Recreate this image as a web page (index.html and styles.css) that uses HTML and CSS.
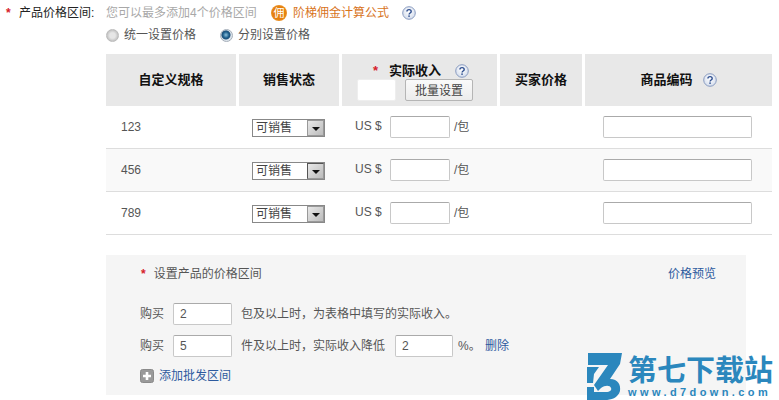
FILE: index.html
```html
<!DOCTYPE html>
<html lang="zh">
<head>
<meta charset="utf-8">
<title>产品价格区间</title>
<link rel="stylesheet" href="styles.css">
</head>
<body>
<svg width="0" height="0" class="defs">
  <defs>
    <radialGradient id="helpbg" cx="50%" cy="40%" r="60%"><stop offset="0" stop-color="#fff"/><stop offset="1" stop-color="#d3dcec"/></radialGradient>
    <symbol id="help" viewBox="0 0 14 14">
      <circle cx="7" cy="7" r="6.3" fill="url(#helpbg)" stroke="#8a9cc0" stroke-width="1"/>
      <path d="M4.9 5.6c0-1.3 1-2 2.2-2s2.1.7 2.1 1.8c0 1.6-2.1 1.6-2.1 3" fill="none" stroke="#2f4f8f" stroke-width="1.4"/>
      <rect x="6.3" y="9.4" width="1.5" height="1.5" fill="#2f4f8f"/>
    </symbol>
  </defs>
</svg>
<main class="page">
  <div class="head-row">
    <span class="req star-top">*</span>
    <span class="label">产品价格区间:</span>
    <span class="hint">您可以最多添加4个价格区间</span>
    <span class="badge">佣</span>
    <a class="formula">阶梯佣金计算公式</a>
    <svg class="help help-top"><use href="#help"/></svg>
  </div>
  <div class="radio-row">
    <span class="radio"></span><span class="radio-text first">统一设置价格</span>
    <span class="radio on"></span><span class="radio-text">分别设置价格</span>
  </div>

  <section class="table">
    <div class="thead">
      <div class="th">自定义规格</div>
      <div class="th">销售状态</div>
      <div class="th th-income">
        <div class="income-title"><span class="req">*</span><b>实际收入</b><svg class="help"><use href="#help"/></svg></div>
        <div class="income-tools"><input class="input batch" type="text"><button class="btn" type="button">批量设置</button></div>
      </div>
      <div class="th">买家价格</div>
      <div class="th"><b>商品编码</b><svg class="help help-code"><use href="#help"/></svg></div>
    </div>

    <div class="tr">
      <div class="td name">123</div>
      <div class="td status"><span class="select">可销售<i class="arrow"></i></span></div>
      <div class="td income"><span class="us">US $</span><input class="input price" type="text"><span class="unit">/包</span></div>
      <div class="td"></div>
      <div class="td code"><input class="input code-input" type="text"></div>
    </div>
    <div class="tr alt">
      <div class="td name">456</div>
      <div class="td status"><span class="select">可销售<i class="arrow"></i></span></div>
      <div class="td income"><span class="us">US $</span><input class="input price" type="text"><span class="unit">/包</span></div>
      <div class="td"></div>
      <div class="td code"><input class="input code-input" type="text"></div>
    </div>
    <div class="tr">
      <div class="td name">789</div>
      <div class="td status"><span class="select">可销售<i class="arrow"></i></span></div>
      <div class="td income"><span class="us">US $</span><input class="input price" type="text"><span class="unit">/包</span></div>
      <div class="td"></div>
      <div class="td code"><input class="input code-input" type="text"></div>
    </div>
  </section>

  <section class="panel">
    <div class="panel-head">
      <div><span class="req panel-star">*</span>设置产品的价格区间</div>
      <a class="link">价格预览</a>
    </div>
    <div class="range first-range">
      <span class="buy">购买</span><input class="input qty" type="text" value="2">
      <span class="after">包及以上时，为表格中填写的实际收入。</span>
    </div>
    <div class="range">
      <span class="buy">购买</span><input class="input qty" type="text" value="5">
      <span class="after">件及以上时，实际收入降低</span><input class="input qty pct" type="text" value="2">
      <span class="percent">%。</span><a class="link">删除</a>
    </div>
    <div class="add">
      <svg class="plus" viewBox="0 0 14 14"><rect x=".5" y=".5" width="13" height="13" rx="2" fill="#9a9a9a" stroke="#8a8a8a"/><path d="M7 3v8M3 7h8" stroke="#fff" stroke-width="2.6"/></svg>
      <a class="link">添加批发区间</a>
    </div>
  </section>
</main>

<div class="watermark">
  <svg class="wm-logo" viewBox="0 0 36 48">
    <path d="M2 1H36L34 12 24 27C32 27 35 33 34 39 32 46 25 48 19 48H1V35H8V40H20C24 40 26 38 25 36 24 33 19 33 15 36L12 39 8 33 22 13H2Z" fill="#2b87bd"/>
    <path d="M1 15H13L8 22 7 31H1Z" fill="#2b87bd"/>
  </svg>
  <div class="wm-text">
    <div class="wm-cn">第七下载站</div>
    <div class="wm-url">www.d7down.com</div>
  </div>
</div>
</body>
</html>
```
FILE: styles.css
```css
* { box-sizing: border-box; }
html, body { margin: 0; height: 400px; overflow: hidden; background: #fff; }
body {
  position: relative;
  font: 12px/16px "Liberation Sans", "Noto Sans CJK SC", sans-serif;
  color: #555;
}
.defs { position: absolute; }
.page { padding: 4px 0 0 6px; }
.req { color: #d6202a; font-weight: 700; }
.link { color: #2d5a9e; }

.head-row { display: flex; align-items: center; height: 18px; }
.star-top { width: 13px; }
.label { width: 87px; color: #222; }
.hint { width: 165px; color: #a8a8a8; }
.badge {
  width: 16px; height: 16px; border-radius: 50%;
  background: radial-gradient(circle, #e57f0c 55%, #f6b65c 100%);
  color: #fff; font-size: 11px; line-height: 16px; text-align: center;
}
.formula { margin-left: 6px; width: 109px; color: #d8741c; }
.help { width: 14px; height: 14px; flex: none; }

.radio-row { display: flex; align-items: center; height: 20px; margin: 3px 0 0 100px; }
.radio {
  width: 13px; height: 13px; border-radius: 50%; flex: none;
  background: radial-gradient(circle, #e6e6e6 35%, #c4c4c4 70%, #f0f0f0 100%);
  border: 1px solid #bbb;
}
.radio.on {
  width: 13px; height: 13px;
  background: radial-gradient(circle at 45% 45%, #8fc2dd 0, #1f5f8c 35%, #1f4f78 48%, #d9e2ea 58%, #eef2f6 100%);
  border: 1px solid #a5aeb9;
}
.radio-text { margin-left: 5px; color: #555; }
.radio-text.first { width: 96px; }

.table { margin: 9px 0 0 100px; width: 666px; }
.thead, .tr { display: grid; grid-template-columns: 130px 100px 155px 82px 187px; column-gap: 3px; }
.thead { height: 52px; }
.th {
  display: flex; align-items: center; justify-content: center;
  background: #e8e8e8; color: #111; font-weight: 700; font-size: 13px;
}
.th b { font-weight: 700; }
.th-income { flex-direction: column; }
.income-title { display: flex; align-items: center; height: 18px; margin-top: 2px; margin-left: 3px; }
.income-title .req { margin-right: 11px; }
.income-title .help { margin-left: 14px; }
.income-tools { display: flex; align-items: center; gap: 9px; font-weight: 400; margin-left: -9px; margin-top: -1px; }
.help-code { margin-left: 10px; }

.input { border: 1px solid #c8c8c8; border-top-color: #aaa; border-radius: 2px; background: #fff; padding: 0 6px; height: 22px; font: inherit; color: #555; }
.batch { width: 39px; border-color: #eee; height: 22px; }
.btn {
  width: 68px; height: 22px; padding: 0;
  font: 400 12px "Liberation Sans", "Noto Sans CJK SC", sans-serif; color: #444;
  background: linear-gradient(#fafafa, #ececec);
  border: 1px solid #b5b5b5; border-radius: 2px;
}

.tr { height: 43px; border-bottom: 1px solid #ddd; align-items: center; }
.tr.alt { background: #f9f9f9; }
.name { padding-left: 15px; }
.status { padding-left: 13px; }
.select {
  position: relative; display: block; width: 73px; height: 18px; margin-top: 2px;
  border: 1px solid #888; background: #fff; padding-left: 3px; line-height: 17px; color: #444;
}
.arrow {
  position: absolute; right: 0; top: 0; width: 17px; height: 16px;
  background: linear-gradient(135deg, #e8e8e8, #bbb); border: 1px solid #999;
}
.alt .arrow { border-color: #555 #999 #999 #555; }
.arrow::after {
  content: ""; position: absolute; left: 4px; top: 6px;
  border: 4px solid transparent; border-top-color: #111; border-bottom: 0;
}
.income { display: flex; align-items: center; padding-left: 13px; }
.us { width: 35px; margin-top: -3px; }
.price { width: 60px; height: 22px; }
.unit { margin-left: 4px; }
.code { padding-left: 18px; }
.code-input { width: 149px; }

.panel { margin: 20px 0 0 100px; width: 640px; height: 140px; background: #f5f5f5; padding: 11px 30px 0 35px; }
.panel-head { display: flex; justify-content: space-between; height: 16px; color: #555; margin-left: 0; }
.panel-star { margin-right: 8px; }
.range { display: flex; align-items: center; height: 22px; margin: 10px 0 0 -1px; }
.first-range { margin-top: 21px; }
.buy { width: 33px; }
.qty { width: 59px; }
.after { margin-left: 9px; }
.pct { margin-left: 10px; width: 58px; }
.percent { margin-left: 5px; width: 27px; }
.add { display: flex; align-items: center; margin: 11px 0 0 -1px; gap: 5px; }
.plus { width: 14px; height: 14px; }

.watermark { position: absolute; left: 586px; top: 352px; display: flex; gap: 6px; color: #2b87bd; }
.wm-logo { width: 36px; height: 48px; }
.wm-text { margin-top: 2px; }
.wm-cn { font: 700 29px/29px "Noto Sans CJK SC", sans-serif; width: 145px; }
.wm-url { font: 700 11px/12px "Liberation Sans", sans-serif; letter-spacing: 3.4px; margin-top: 3px; }
```
